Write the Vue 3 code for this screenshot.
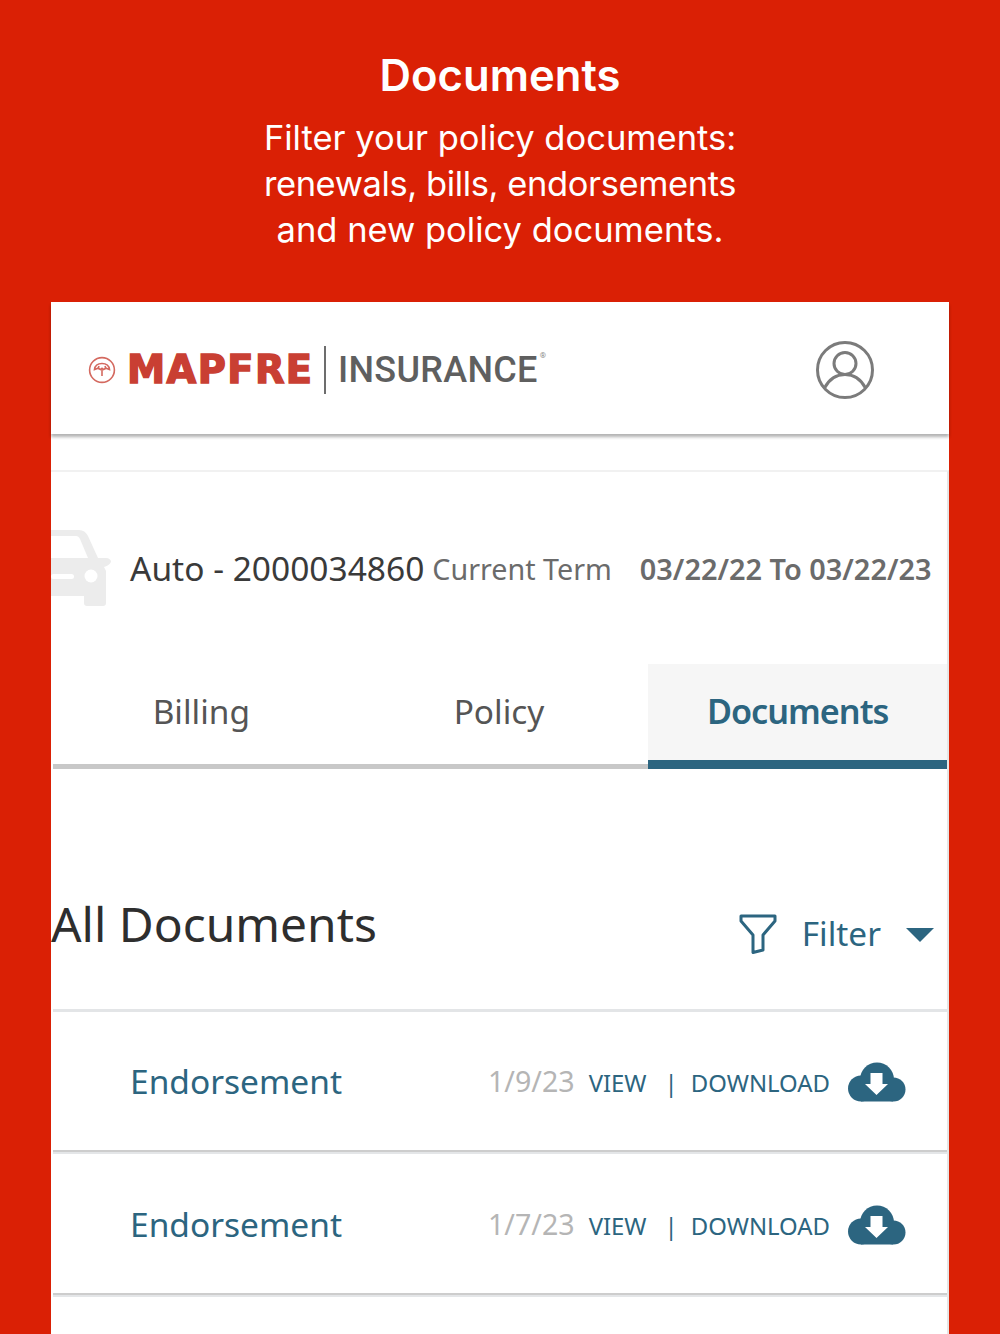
<script setup>
const rows = [
  { name: 'Endorsement', date: '1/9/23' },
  { name: 'Endorsement', date: '1/7/23' },
]
</script>

<template>
  <div class="page">
    <header class="promo">
      <h1>Documents</h1>
      <p>Filter your policy documents:<br /><span class="tight">renewals, bills, endorsements</span><br />and new policy documents.</p>
    </header>

    <main class="device">
      <div class="topbar">
        <div class="logo">
          <svg class="emblem" viewBox="0 0 28 28" width="28" height="28" fill="none" stroke="#d4695f" stroke-width="1.6">
            <circle cx="14" cy="14" r="12.4" />
            <path d="M6.500 13.500C7 9.500 10 7.500 14 7.500s7 2 7.500 6l-3.600-1.300-2.400 1.300-1.500-1.300-1.500 1.300-2.400-1.300z" />
            <path d="M14 12v8M11 10l-1 3M17 10l1 3" />
          </svg>
          <span class="brand">MAPFRE</span>
          <span class="divider"></span>
          <span class="insurance">INSURANCE</span><span class="reg">®</span>
        </div>
        <svg class="avatar" viewBox="0 0 58 58" width="58" height="58" fill="none" stroke="#7b7b7b" stroke-width="3">
          <circle cx="29" cy="29" r="27.500" />
          <circle cx="29" cy="22.500" r="11" />
          <path d="M8.500 47C13 38.500 20 33.500 29 33.500S45 38.500 49.500 47" />
        </svg>
      </div>

      <section class="panel">
        <div class="policy">
          <svg class="car" viewBox="0 0 60 76" width="60" height="76" fill="#ececec">
            <path d="M0 0h28c4 0 7 2 9 6l10 22h8c3 0 5 2 5 3.500S57 36 53 37l2 4v32c0 2-1 3-3 3H36c-2 0-3-1-3-3v-7H0z" />
            <circle cx="40" cy="46" r="6.500" fill="#fff" />
            <rect x="0" y="44" width="23" height="5" rx="2.500" fill="#fff" />
            <path d="M0 6h25c2 0 3 1 4 3l8 19H0z" fill="#fff" />
          </svg>
          <span class="policy-id">Auto - 2000034860</span>
          <span class="term">Current Term</span>
          <span class="dates">03/22/22 To 03/22/23</span>
        </div>

        <nav class="tabs">
          <div class="tab">Billing</div>
          <div class="tab">Policy</div>
          <div class="tab active">Documents</div>
        </nav>

        <div class="heading-row">
          <h2>All Documents</h2>
          <div class="filter">
            <svg viewBox="0 0 38 40" width="38" height="40" fill="none" stroke="#2c6580" stroke-width="3" stroke-linejoin="round">
              <path d="M2 2h34v5L24 21v15l-10 2.500V21L2 7z" />
            </svg>
            <span>Filter</span>
            <i class="caret"></i>
          </div>
        </div>

        <div v-for="row in rows" :key="row.date" class="row">
          <span class="row-name">{{ row.name }}</span>
          <div class="row-actions">
            <span class="date">{{ row.date }}</span>
            <span class="link">VIEW</span>
            <span class="sep">|</span>
            <span class="link">DOWNLOAD</span>
            <svg class="cloud" viewBox="0 0 58 40" width="58" height="40">
              <g fill="#2c6580">
                <circle cx="13" cy="26.500" r="13" />
                <circle cx="29" cy="17.500" r="17" />
                <circle cx="45.500" cy="27.500" r="12" />
                <rect x="13" y="20" width="32" height="19.500" />
              </g>
              <path fill="#fff" d="M22.500 11h12v11H40L28.500 33 17 22h5.500z" />
            </svg>
          </div>
        </div>
        <div class="row"></div>
      </section>
    </main>
  </div>
</template>

<style>
html, body { margin: 0; overflow: hidden; }
</style>

<style scoped>
.page {
  height: 1334px;
  overflow: hidden;
  background: #da2005;
  font-family: "Noto Sans", sans-serif;
  display: flex;
  flex-direction: column;
  align-items: center;
}
.promo {
  flex: none;
  height: 302px;
  box-sizing: border-box;
  padding-top: 50px;
  color: #fff;
  text-align: center;
  font-family: Inter, sans-serif;
}
.promo h1 {
  margin: 0 0 13px;
  font-size: 43.6px;
  line-height: 52px;
  font-weight: 600;
}
.promo p {
  margin: 0;
  font-size: 34.5px;
  line-height: 46px;
  font-weight: 400;
}
.tight { letter-spacing: -.4px; }
.device {
  width: 898px;
  flex: 1 0 auto;
  background: #fff;
}
.topbar {
  height: 132px;
  box-sizing: border-box;
  display: flex;
  align-items: center;
  justify-content: space-between;
  padding: 4px 75px 0 37px;
  box-shadow: 0 3px 3px rgba(0, 0, 0, .3);
  position: relative;
}
.logo {
  display: flex;
  align-items: center;
}
.emblem { flex: none; }
.brand {
  margin-left: 11px;
  font: 700 38.4px/1 "DejaVu Sans", sans-serif;
  -webkit-text-stroke: 1.5px #c93f33;
  color: #c93f33;
  width: 197px;
  letter-spacing: 1.4px;
}
.divider {
  width: 2px;
  height: 48px;
  background: #6d6d6d;
  margin: 0 12px 0 0;
}
.insurance {
  font: 500 36px/1 Roboto, sans-serif;
  color: #5f5f5f;
  letter-spacing: .3px;
}
.reg {
  font: 400 8px/1 Roboto, sans-serif;
  color: #888;
  align-self: flex-start;
  margin: 6px 0 0 2px;
}
.panel {
  margin-top: 36px;
  border-top: 2px solid #f1f1f1;
  border-right: 2px solid #e6e6e6;
}
.policy {
  height: 192px;
  display: flex;
  align-items: center;
  color: #3a3a3a;
}
.car { flex: none; margin-right: 19px; }
.policy-id { font-size: 33.5px; }
.term { font-size: 28.7px; color: #6b6b6b; margin-left: 8px; }
.dates { font-size: 28.9px; font-weight: 600; color: #6b6b6b; margin-left: 28px; white-space: nowrap; }
.tabs {
  display: grid;
  grid-template-columns: 1fr 1fr 1fr;
  height: 105px;
}
.tab {
  display: flex;
  align-items: center;
  justify-content: center;
  font-size: 33.4px;
  color: #555;
  border-bottom: 5px solid #c8c8c8;
  padding-bottom: 7px;
  box-sizing: border-box;
}
.tab:first-child { margin-left: 2px; }
.tab.active {
  background: #f6f6f6;
  color: #2c6580;
  font-weight: 600;
  letter-spacing: -1px;
  font-size: 34.2px;
  padding-bottom: 3px;
  border-bottom: 9px solid #2c6580;
}
.heading-row {
  height: 243px;
  box-sizing: border-box;
  display: flex;
  align-items: flex-start;
  justify-content: space-between;
  padding: 123px 13px 0 0;
  border-bottom: 3px solid #e3e5e7;
  margin-left: 2px;
}
h2 {
  margin: 0 0 0 -2px;
  font-size: 47.9px;
  font-weight: 400;
  line-height: 64px;
  color: #2e2e2e;
}
.filter {
  display: flex;
  align-items: center;
  color: #2c6580;
  font-size: 33.4px;
  padding-top: 18px;
}
.filter svg { margin-top: 2px; }
.filter span { margin-left: 25px; }
.caret {
  margin: 3px 0 0 25px;
  width: 0;
  height: 0;
  border: 14px solid transparent;
  border-top: 14px solid #2c6580;
  border-bottom: 0;
}
.row {
  height: 140px;
  box-sizing: border-box;
  margin-left: 2px;
  display: flex;
  align-items: center;
  justify-content: space-between;
  padding: 0 41px 0 77px;
  border-bottom: 2px solid #cdcdcd;
  box-shadow: 0 2px 0 #e4e6e8;
}
.row + .row { margin-top: 3px; }
.row-name { font-size: 33.5px; color: #2c6580; }
.row-actions {
  display: flex;
  align-items: center;
  color: #2c6580;
}
.date { font-size: 28.6px; color: #b5b5b5; margin: -2px 14px 0 0; }
.link { font-size: 23.9px; margin-top: 2px; }
.sep { font-size: 24px; margin: 2px 13px 0 18px; }
.cloud { margin: 2px 0 0 18px; }
</style>
